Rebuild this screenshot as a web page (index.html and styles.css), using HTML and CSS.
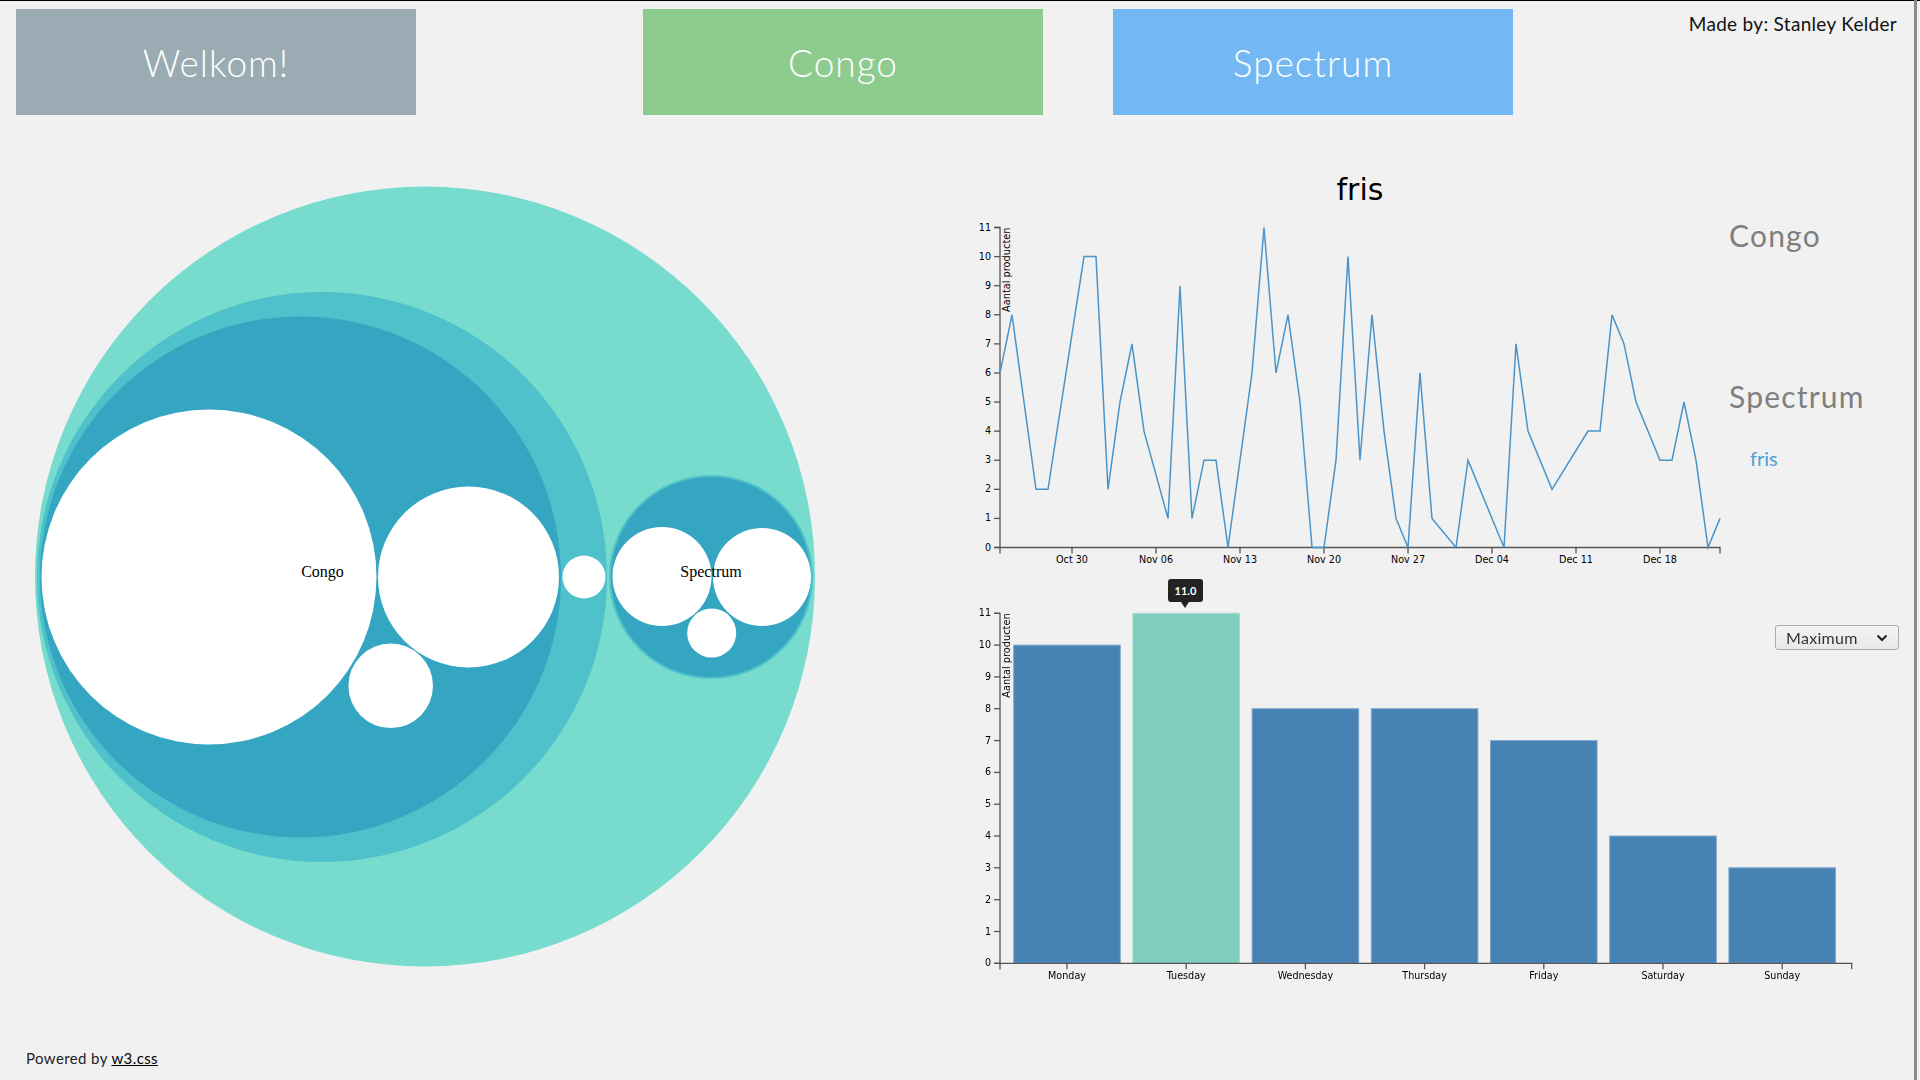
FILE: index.html
```html
<!DOCTYPE html>
<html lang="nl">
<head>
<meta charset="utf-8">
<title>Dashboard</title>
<link rel="stylesheet" href="styles.css">
</head>
<body>
<div class="edge"></div>
<header class="topbar">
  <a class="navbtn btn-grey">Welkom!</a>
  <a class="navbtn btn-green gap-1">Congo</a>
  <a class="navbtn btn-blue gap-2">Spectrum</a>
  <div class="madeby">Made by: Stanley Kelder</div>
</header>

<main class="main">
  <section class="pack">
    <svg class="pack-svg" width="960" height="840" viewBox="0 0 960 840">
      <circle cx="425" cy="426.5" r="390" fill="#77dbcd"/>
      <circle cx="322" cy="427" r="285" fill="#4fc1ca"/>
      <circle cx="300.5" cy="427" r="260.5" fill="#34a6c2"/>
      <circle cx="209" cy="427" r="167.5" fill="#ffffff"/>
      <circle cx="468.5" cy="427" r="90.5" fill="#ffffff"/>
      <circle cx="390.7" cy="535.8" r="42.3" fill="#ffffff"/>
      <circle cx="584" cy="427" r="21.5" fill="#ffffff"/>
      <circle cx="711" cy="427" r="102" fill="#4fc1ca"/>
      <circle cx="711" cy="427" r="100" fill="#34a6c2"/>
      <circle cx="662" cy="426.5" r="49.5" fill="#ffffff"/>
      <circle cx="762" cy="427" r="49" fill="#ffffff"/>
      <circle cx="711.7" cy="483" r="24.5" fill="#ffffff"/>
      <text class="pack-label" x="322.5" y="427">Congo</text>
      <text class="pack-label" x="711" y="427">Spectrum</text>
    </svg>
  </section>

  <section class="charts">
    <div class="line-row">
      <svg class="line-svg" width="760" height="420" viewBox="0 0 760 420">
        <text class="chart-title" x="400" y="50">fris</text>
        <g class="axis">
          <path d="M34,77.5H40V397.5H34"/>
          <path d="M40,403.5V397.5H760V403.5"/>
          <g class="ytick">
            <line x1="34" x2="40" y1="397.5" y2="397.5"/><text x="31" y="397.5" dy=".32em">0</text>
            <line x1="34" x2="40" y1="368.41" y2="368.41"/><text x="31" y="368.41" dy=".32em">1</text>
            <line x1="34" x2="40" y1="339.32" y2="339.32"/><text x="31" y="339.32" dy=".32em">2</text>
            <line x1="34" x2="40" y1="310.23" y2="310.23"/><text x="31" y="310.23" dy=".32em">3</text>
            <line x1="34" x2="40" y1="281.14" y2="281.14"/><text x="31" y="281.14" dy=".32em">4</text>
            <line x1="34" x2="40" y1="252.05" y2="252.05"/><text x="31" y="252.05" dy=".32em">5</text>
            <line x1="34" x2="40" y1="222.96" y2="222.96"/><text x="31" y="222.96" dy=".32em">6</text>
            <line x1="34" x2="40" y1="193.87" y2="193.87"/><text x="31" y="193.87" dy=".32em">7</text>
            <line x1="34" x2="40" y1="164.78" y2="164.78"/><text x="31" y="164.78" dy=".32em">8</text>
            <line x1="34" x2="40" y1="135.69" y2="135.69"/><text x="31" y="135.69" dy=".32em">9</text>
            <line x1="34" x2="40" y1="106.6" y2="106.6"/><text x="31" y="106.6" dy=".32em">10</text>
            <line x1="34" x2="40" y1="77.51" y2="77.51"/><text x="31" y="77.51" dy=".32em">11</text>
          </g>
          <g class="xtick">
            <line x1="112" x2="112" y1="397.5" y2="403.5"/><text x="112" y="406.5" dy=".71em">Oct 30</text>
            <line x1="196" x2="196" y1="397.5" y2="403.5"/><text x="196" y="406.5" dy=".71em">Nov 06</text>
            <line x1="280" x2="280" y1="397.5" y2="403.5"/><text x="280" y="406.5" dy=".71em">Nov 13</text>
            <line x1="364" x2="364" y1="397.5" y2="403.5"/><text x="364" y="406.5" dy=".71em">Nov 20</text>
            <line x1="448" x2="448" y1="397.5" y2="403.5"/><text x="448" y="406.5" dy=".71em">Nov 27</text>
            <line x1="532" x2="532" y1="397.5" y2="403.5"/><text x="532" y="406.5" dy=".71em">Dec 04</text>
            <line x1="616" x2="616" y1="397.5" y2="403.5"/><text x="616" y="406.5" dy=".71em">Dec 11</text>
            <line x1="700" x2="700" y1="397.5" y2="403.5"/><text x="700" y="406.5" dy=".71em">Dec 18</text>
          </g>
        </g>
        <text class="axis-label" transform="rotate(-90)" x="-77.5" y="43" dy=".71em">Aantal producten</text>
        <polyline class="data-line" points="40,222.9 52,164.8 76,339.3 88,339.3 124,106.6 136,106.6 148,339.3 160,252 172,193.9 184,281.1 208,368.4 220,135.7 232,368.4 244,310.2 256,310.2 268,397.5 292,222.9 304,77.5 316,222.9 328,164.8 340,252 352,397.5 364,397.5 376,310.2 388,106.6 400,310.2 412,164.8 424,281.1 436,368.4 448,397.5 460,222.9 472,368.4 496,397.5 508,310.2 544,397.5 556,193.9 568,281.1 592,339.3 628,281.1 640,281.1 652,164.8 664,193.9 676,252 700,310.2 712,310.2 724,252 736,310.2 748,397.5 760,368.4"/>
      </svg>
      <div class="legend">
        <div class="legend-item legend-congo">Congo</div>
        <div class="legend-item legend-spectrum">Spectrum</div>
        <div class="legend-sub">fris</div>
      </div>
    </div>

    <div class="bar-row">
      <svg class="bar-svg" width="900" height="420" viewBox="0 0 900 420">
        <rect class="bar" x="53.7" y="75.1" width="106.6" height="318.2"/>
        <rect class="bar bar-active" x="172.9" y="43.3" width="106.6" height="350"/>
        <rect class="bar" x="292.1" y="138.7" width="106.6" height="254.6"/>
        <rect class="bar" x="411.3" y="138.7" width="106.6" height="254.6"/>
        <rect class="bar" x="530.5" y="170.6" width="106.6" height="222.7"/>
        <rect class="bar" x="649.7" y="266" width="106.6" height="127.3"/>
        <rect class="bar" x="768.9" y="297.8" width="106.6" height="95.5"/>
        <g class="axis">
          <path d="M34,43.3H40V393.3H34"/>
          <path d="M40,399.3V393.3H891.7V399.3"/>
          <g class="ytick">
            <line x1="34" x2="40" y1="393.3" y2="393.3"/><text x="31" y="393.3" dy=".32em">0</text>
            <line x1="34" x2="40" y1="361.5" y2="361.5"/><text x="31" y="361.5" dy=".32em">1</text>
            <line x1="34" x2="40" y1="329.7" y2="329.7"/><text x="31" y="329.7" dy=".32em">2</text>
            <line x1="34" x2="40" y1="297.8" y2="297.8"/><text x="31" y="297.8" dy=".32em">3</text>
            <line x1="34" x2="40" y1="266" y2="266"/><text x="31" y="266" dy=".32em">4</text>
            <line x1="34" x2="40" y1="234.2" y2="234.2"/><text x="31" y="234.2" dy=".32em">5</text>
            <line x1="34" x2="40" y1="202.4" y2="202.4"/><text x="31" y="202.4" dy=".32em">6</text>
            <line x1="34" x2="40" y1="170.6" y2="170.6"/><text x="31" y="170.6" dy=".32em">7</text>
            <line x1="34" x2="40" y1="138.7" y2="138.7"/><text x="31" y="138.7" dy=".32em">8</text>
            <line x1="34" x2="40" y1="106.9" y2="106.9"/><text x="31" y="106.9" dy=".32em">9</text>
            <line x1="34" x2="40" y1="75.1" y2="75.1"/><text x="31" y="75.1" dy=".32em">10</text>
            <line x1="34" x2="40" y1="43.3" y2="43.3"/><text x="31" y="43.3" dy=".32em">11</text>
          </g>
          <g class="xtick">
            <line x1="107" x2="107" y1="393.3" y2="399.3"/><text x="107" y="402.3" dy=".71em">Monday</text>
            <line x1="226.2" x2="226.2" y1="393.3" y2="399.3"/><text x="226.2" y="402.3" dy=".71em">Tuesday</text>
            <line x1="345.4" x2="345.4" y1="393.3" y2="399.3"/><text x="345.4" y="402.3" dy=".71em">Wednesday</text>
            <line x1="464.6" x2="464.6" y1="393.3" y2="399.3"/><text x="464.6" y="402.3" dy=".71em">Thursday</text>
            <line x1="583.8" x2="583.8" y1="393.3" y2="399.3"/><text x="583.8" y="402.3" dy=".71em">Friday</text>
            <line x1="703" x2="703" y1="393.3" y2="399.3"/><text x="703" y="402.3" dy=".71em">Saturday</text>
            <line x1="822.2" x2="822.2" y1="393.3" y2="399.3"/><text x="822.2" y="402.3" dy=".71em">Sunday</text>
          </g>
        </g>
        <text class="axis-label" transform="rotate(-90)" x="-43.3" y="43" dy=".71em">Aantal producten</text>
      </svg>
      <div class="tip">11.0</div>
      <div class="select-box">
        <span class="select-text">Maximum</span>
        <svg class="chev" width="12" height="8" viewBox="0 0 12 8"><path d="M1.5,1.5 L6,6 L10.5,1.5" fill="none" stroke="#222" stroke-width="2"/></svg>
      </div>
    </div>
  </section>
</main>

<footer class="footer">
  <p>Powered by <a class="footlink">w3.css</a></p>
</footer>
</body>
</html>
```

FILE: styles.css
```css
html, body {
  margin: 0;
  padding: 0;
}
body {
  background: #f1f1f1;
  border-top: 1px solid #000;
  font-family: "Lato", "Open Sans", sans-serif;
  color: #000;
  width: 1920px;
  height: 1079px;
  overflow: hidden;
  position: relative;
}
.edge {
  position: fixed;
  top: 0;
  right: 3px;
  width: 3px;
  height: 100%;
  background: #8a8a8a;
}
.topbar {
  display: flex;
  align-items: flex-start;
  padding: 8px 23px 0 16px;
  height: 106px;
}
.navbtn {
  width: 400px;
  height: 106px;
  display: flex;
  align-items: center;
  justify-content: center;
  color: #fff;
  font-size: 37px;
  font-weight: 300;
  letter-spacing: 1px;
}
.btn-grey { background: #9aabb3; }
.btn-green { background: #8ecb8f; }
.btn-blue { background: #73b8f3; }
.gap-1 { margin-left: 227px; }
.gap-2 { margin-left: 70px; }
.madeby {
  margin-left: auto;
  margin-top: 3px;
  font-size: 19px;
  letter-spacing: 0.3px;
  color: #111;
}

.main {
  display: flex;
  margin-top: 35px;
  height: 840px;
}
.pack {
  width: 960px;
  flex: none;
}
.pack-svg { display: block; }
.pack-label {
  font-family: "Liberation Serif", serif;
  font-size: 16px;
  text-anchor: middle;
  fill: #000;
}

.charts {
  display: flex;
  flex-direction: column;
  width: 960px;
}
.line-row {
  display: flex;
  height: 420px;
}
.line-svg, .bar-svg {
  display: block;
  flex: none;
  overflow: visible;
}
.chart-title {
  font-family: "DejaVu Sans", Verdana, sans-serif;
  font-size: 30px;
  text-anchor: middle;
  fill: #000;
}
.axis path, .axis line {
  fill: none;
  stroke: #555;
  stroke-width: 1.3;
}
.axis text {
  font-family: "DejaVu Sans", Verdana, sans-serif;
  font-size: 9.6px;
  fill: #000;
}
.ytick text { text-anchor: end; }
.xtick text { text-anchor: middle; }
.axis-label {
  font-family: "DejaVu Sans", Verdana, sans-serif;
  font-size: 9.8px;
  text-anchor: end;
  fill: #000;
}
.data-line {
  fill: none;
  stroke: #4a94c8;
  stroke-width: 1.5;
  stroke-linejoin: miter;
}
.legend {
  display: flex;
  flex-direction: column;
  padding-left: 9px;
  padding-top: 67px;
}
.legend-item {
  font-size: 30px;
  line-height: 36px;
  color: #7f7f7f;
  letter-spacing: 1.2px;
}
.legend-spectrum { margin-top: 125px; }
.legend-sub {
  margin-top: 32px;
  margin-left: 21px;
  font-size: 20px;
  line-height: 24px;
  color: #4a9fd9;
}

.bar-row {
  position: relative;
  height: 420px;
}
.bar {
  fill: #4682b4;
  stroke: #7fa7cc;
  stroke-width: 1;
}
.bar-active {
  fill: #80cdbc;
  stroke: #a2dccd;
}
.tip {
  position: absolute;
  left: 208px;
  top: 9px;
  width: 35px;
  height: 23px;
  background: #232323;
  color: #fff;
  border-radius: 3px;
  font-size: 11px;
  font-weight: 700;
  display: flex;
  align-items: center;
  justify-content: center;
}
.tip::after {
  content: "";
  position: absolute;
  left: 13px;
  top: 23px;
  border-left: 4px solid transparent;
  border-right: 4px solid transparent;
  border-top: 6px solid #232323;
}
.select-box {
  position: absolute;
  left: 815px;
  top: 55px;
  height: 23px;
  width: 102px;
  border: 1px solid #ababab;
  border-radius: 3px;
  background: linear-gradient(#f4f4f4, #e8e8e8);
  display: flex;
  align-items: center;
  justify-content: space-between;
  padding: 0 10px 0 10px;
  box-sizing: content-box;
}
.select-text {
  font-size: 16px;
  letter-spacing: 0.3px;
  color: #333;
}
.chev { display: block; }

.footer {
  padding: 57px 26px 0;
}
.footer p {
  margin: 0;
  font-size: 15px;
  line-height: 22px;
  letter-spacing: 0.4px;
  color: #222;
}
.footlink {
  color: #000;
  text-decoration: underline;
}
```
